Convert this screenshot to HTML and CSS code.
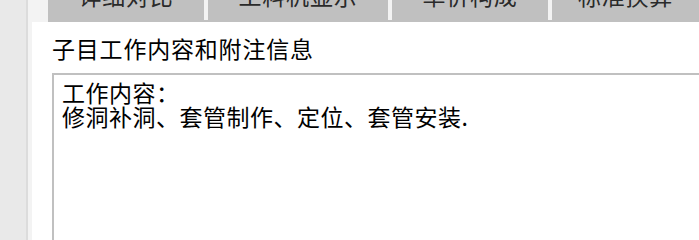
FILE: index.html
```html
<!DOCTYPE html>
<html lang="zh-CN">
<head>
<meta charset="utf-8">
<title>子目工作内容和附注信息</title>
<link rel="stylesheet" href="styles.css">
</head>
<body>
<div class="sidebar"></div>
<div class="main">
  <div class="tabbar">
    <div class="tab tab-w1"><span class="tab-label">详细对比</span></div>
    <div class="tab tab-w2"><span class="tab-label">工料机显示</span></div>
    <div class="tab tab-w1"><span class="tab-label">单价构成</span></div>
    <div class="tab tab-rest"><span class="tab-label">标准换算</span></div>
  </div>
  <div class="panel">
    <div class="heading">子目工作内容和附注信息</div>
    <div class="infobox">
      <div class="line">工作内容：</div>
      <div class="line">修洞补洞、套管制作、定位、套管安装.</div>
    </div>
  </div>
</div>
</body>
</html>
```
FILE: styles.css
```css
html, body {
  margin: 0;
  padding: 0;
  height: 100%;
}
html {
  background: #f3f3f3;
}
body {
  width: 699px;
  min-height: 221px;
  overflow: hidden;
  display: flex;
  background: #f3f3f3;
  font-family: "Noto Sans CJK SC", "Noto Sans", sans-serif;
  color: #000;
}
.sidebar {
  width: 26px;
  flex: none;
  background: #e9e9e9;
  border-right: 2px solid #dcdcdc;
}
.main {
  flex: 1;
  display: flex;
  flex-direction: column;
  min-width: 0;
}
.tabbar {
  margin-left: 20px;
  height: 20px;
  flex: none;
  display: flex;
  gap: 4px;
  border-bottom: 2px solid #c0c0c0;
}
.tab {
  background: #c0c0c0;
  height: 20px;
  overflow: hidden;
  display: flex;
  justify-content: center;
  flex: none;
}
.tab-w1 { width: 156px; }
.tab-w2 { width: 180px; }
.tab-rest { flex: 1; width: auto; }
.tab-label {
  display: block;
  font-size: 23px;
  line-height: 24px;
  letter-spacing: 0.8px;
  margin-top: -17px;
  color: #2a2a2a;
  white-space: nowrap;
}
.panel {
  margin-left: 4px;
  flex: 1;
  background: #fff;
  padding: 14px 0 0 20px;
  overflow: hidden;
}
.heading {
  font-size: 23px;
  line-height: 24px;
  letter-spacing: 0.8px;
  white-space: nowrap;
}
.infobox {
  margin-top: 13px;
  margin-right: -20px;
  height: 300px;
  border-top: 2px solid #c0c0c0;
  border-left: 2px solid #c0c0c0;
  padding: 5px 0 0 8px;
}
.line {
  font-size: 23px;
  line-height: 24px;
  letter-spacing: 0.5px;
  white-space: nowrap;
}
```
